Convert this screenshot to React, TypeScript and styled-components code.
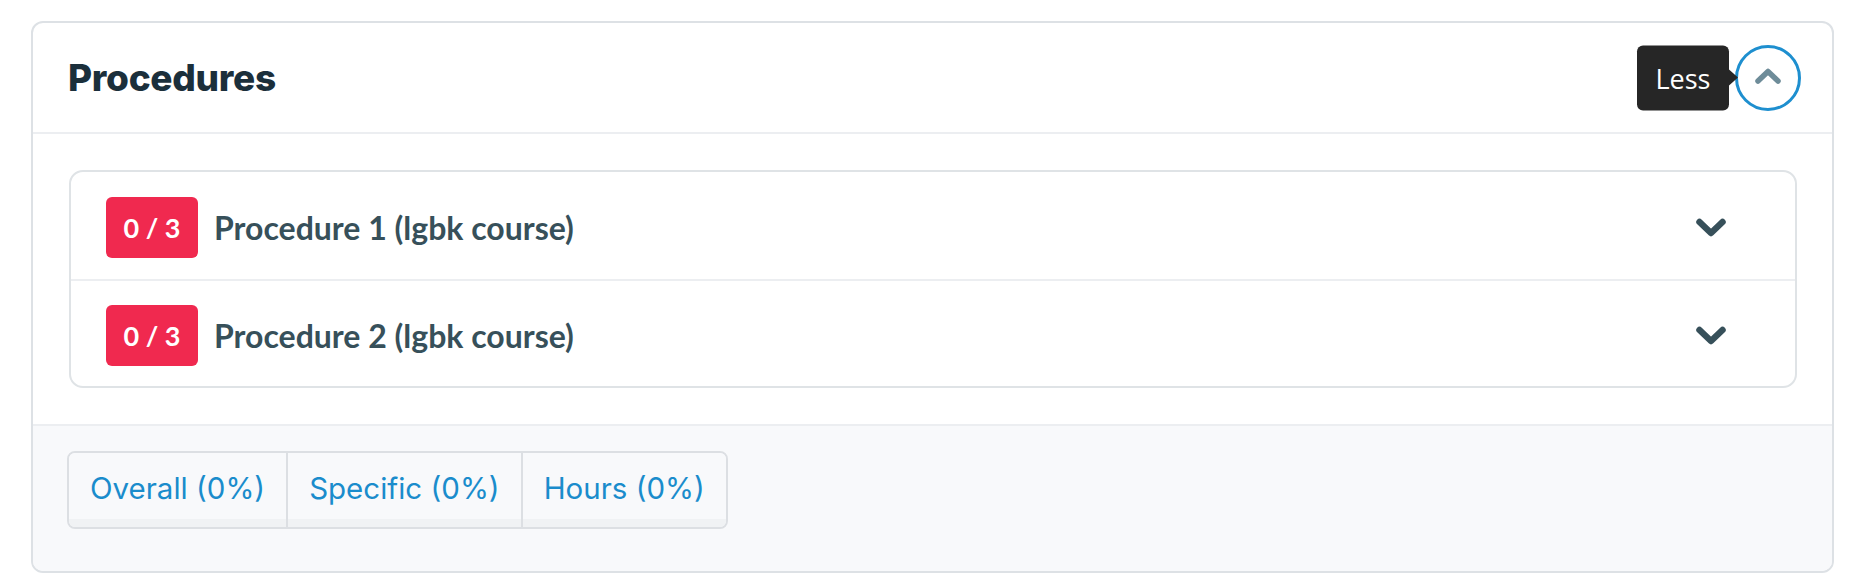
import styled, { createGlobalStyle } from 'styled-components';

const GlobalStyle = createGlobalStyle`
    *, *::before, *::after {
        box-sizing: border-box;
    }
    body {
        margin: 0;
        background: #ffffff;
        font-family: "Inter", "Liberation Sans", sans-serif;
    }
`

const procedures = [
    { done: 0, total: 3, name: 'Procedure 1 (lgbk course)' },
    { done: 0, total: 3, name: 'Procedure 2 (lgbk course)' },
]

const tabs = ['Overall (0%)', 'Specific (0%)', 'Hours (0%)']

const ChevronDown = () => (
    <svg width="32" height="22" viewBox="0 0 32 22">
        <polyline points="4.5,5 16,16 27.5,5" fill="none" stroke="#37505a" strokeWidth="6.5" strokeLinecap="round" strokeLinejoin="round" />
    </svg>
)

const ChevronUp = () => (
    <svg width="28" height="20" viewBox="0 0 28 20">
        <polyline points="4,15 14,5.5 24,15" fill="none" stroke="#6e8c99" strokeWidth="5.5" strokeLinecap="round" strokeLinejoin="round" />
    </svg>
)

const App = () => {
    return (
        <Page>
            <GlobalStyle />
            <Card>
                <Header>
                    <Title>Procedures</Title>
                    <ToggleWrap>
                        <Tooltip>Less</Tooltip>
                        <ToggleButton><ChevronUp /></ToggleButton>
                    </ToggleWrap>
                </Header>
                <Body>
                    <List>
                        {procedures.map((p) => (
                            <Row key={p.name}>
                                <Badge>{p.done} / {p.total}</Badge>
                                <RowTitle>{p.name}</RowTitle>
                                <RowToggle><ChevronDown /></RowToggle>
                            </Row>
                        ))}
                    </List>
                </Body>
                <Footer>
                    <TabGroup>
                        {tabs.map((t) => (
                            <Tab key={t}>{t}</Tab>
                        ))}
                    </TabGroup>
                </Footer>
            </Card>
        </Page>
    )
}

const Page = styled.div`
    padding: 21px 18px 14px 31px;
`

const Card = styled.div`
    border: 2px solid #dde1e5;
    border-radius: 12px;
    overflow: hidden;
    background: #ffffff;
`

const Header = styled.div`
    display: flex;
    align-items: center;
    justify-content: space-between;
    height: 111px;
    padding: 0 31px 0 35px;
    border-bottom: 2px solid #eceef1;
`

const Title = styled.h2`
    margin: 0;
    font-family: "Inter", sans-serif;
    font-size: 37px;
    font-weight: 800;
    color: #1b2f3b;
    letter-spacing: -0.3px;
`

const ToggleWrap = styled.div`
    position: relative;
    display: flex;
    align-items: center;
`

const Tooltip = styled.div`
    position: absolute;
    right: 72px;
    top: 50%;
    transform: translateY(-50%);
    width: 92px;
    height: 65px;
    display: flex;
    align-items: center;
    justify-content: center;
    background: #262626;
    color: #ffffff;
    border-radius: 6px;
    font-family: "Open Sans", sans-serif;
    font-size: 27px;
    &::after {
        content: '';
        position: absolute;
        right: -9px;
        top: 50%;
        transform: translateY(-50%);
        border-style: solid;
        border-width: 8px 0 8px 9px;
        border-color: transparent transparent transparent #262626;
    }
`

const ToggleButton = styled.button`
    width: 66px;
    height: 66px;
    border-radius: 50%;
    border: 3px solid #1e8fcf;
    background: #ffffff;
    display: flex;
    align-items: center;
    justify-content: center;
    padding: 0 0 4px;
    cursor: pointer;
`

const Body = styled.div`
    padding: 36px 35px 36px 36px;
`

const List = styled.div`
    border: 2px solid #dfe3e6;
    border-radius: 14px;
`

const Row = styled.div`
    display: flex;
    align-items: center;
    height: 107px;
    padding: 4px 68px 0 35px;
    & + & {
        border-top: 2px solid #eceef1;
    }
`

const Badge = styled.span`
    display: flex;
    align-items: center;
    justify-content: center;
    width: 92px;
    height: 61px;
    border-radius: 6px;
    background: #f0294f;
    color: #ffffff;
    font-family: "Lato", sans-serif;
    font-weight: 700;
    font-size: 27px;
`

const RowTitle = styled.span`
    flex: 1;
    margin-left: 16px;
    font-family: "Lato", sans-serif;
    font-weight: 700;
    font-size: 32px;
    color: #37505a;
`

const RowToggle = styled.span`
    display: flex;
    line-height: 0;
`

const Footer = styled.div`
    display: flex;
    align-items: flex-start;
    background: #f8f9fb;
    border-top: 2px solid #eceef1;
    padding: 25px 34px 42px;
`

const TabGroup = styled.div`
    display: flex;
    height: 78px;
    border: 2px solid #dcdfe3;
    border-radius: 8px;
    overflow: hidden;
    background: #f8f9fb;
`

const Tab = styled.div`
    display: flex;
    align-items: center;
    padding: 0 21px 5px;
    font-family: "Inter", sans-serif;
    font-size: 29.5px;
    font-weight: 400;
    color: #1a8ccc;
    background: linear-gradient(to bottom, #f8f9fb 0, #f8f9fb 66px, #f0f2f4 66px);
    & + & {
        border-left: 2px solid #dcdfe3;
    }
`

export default App;
